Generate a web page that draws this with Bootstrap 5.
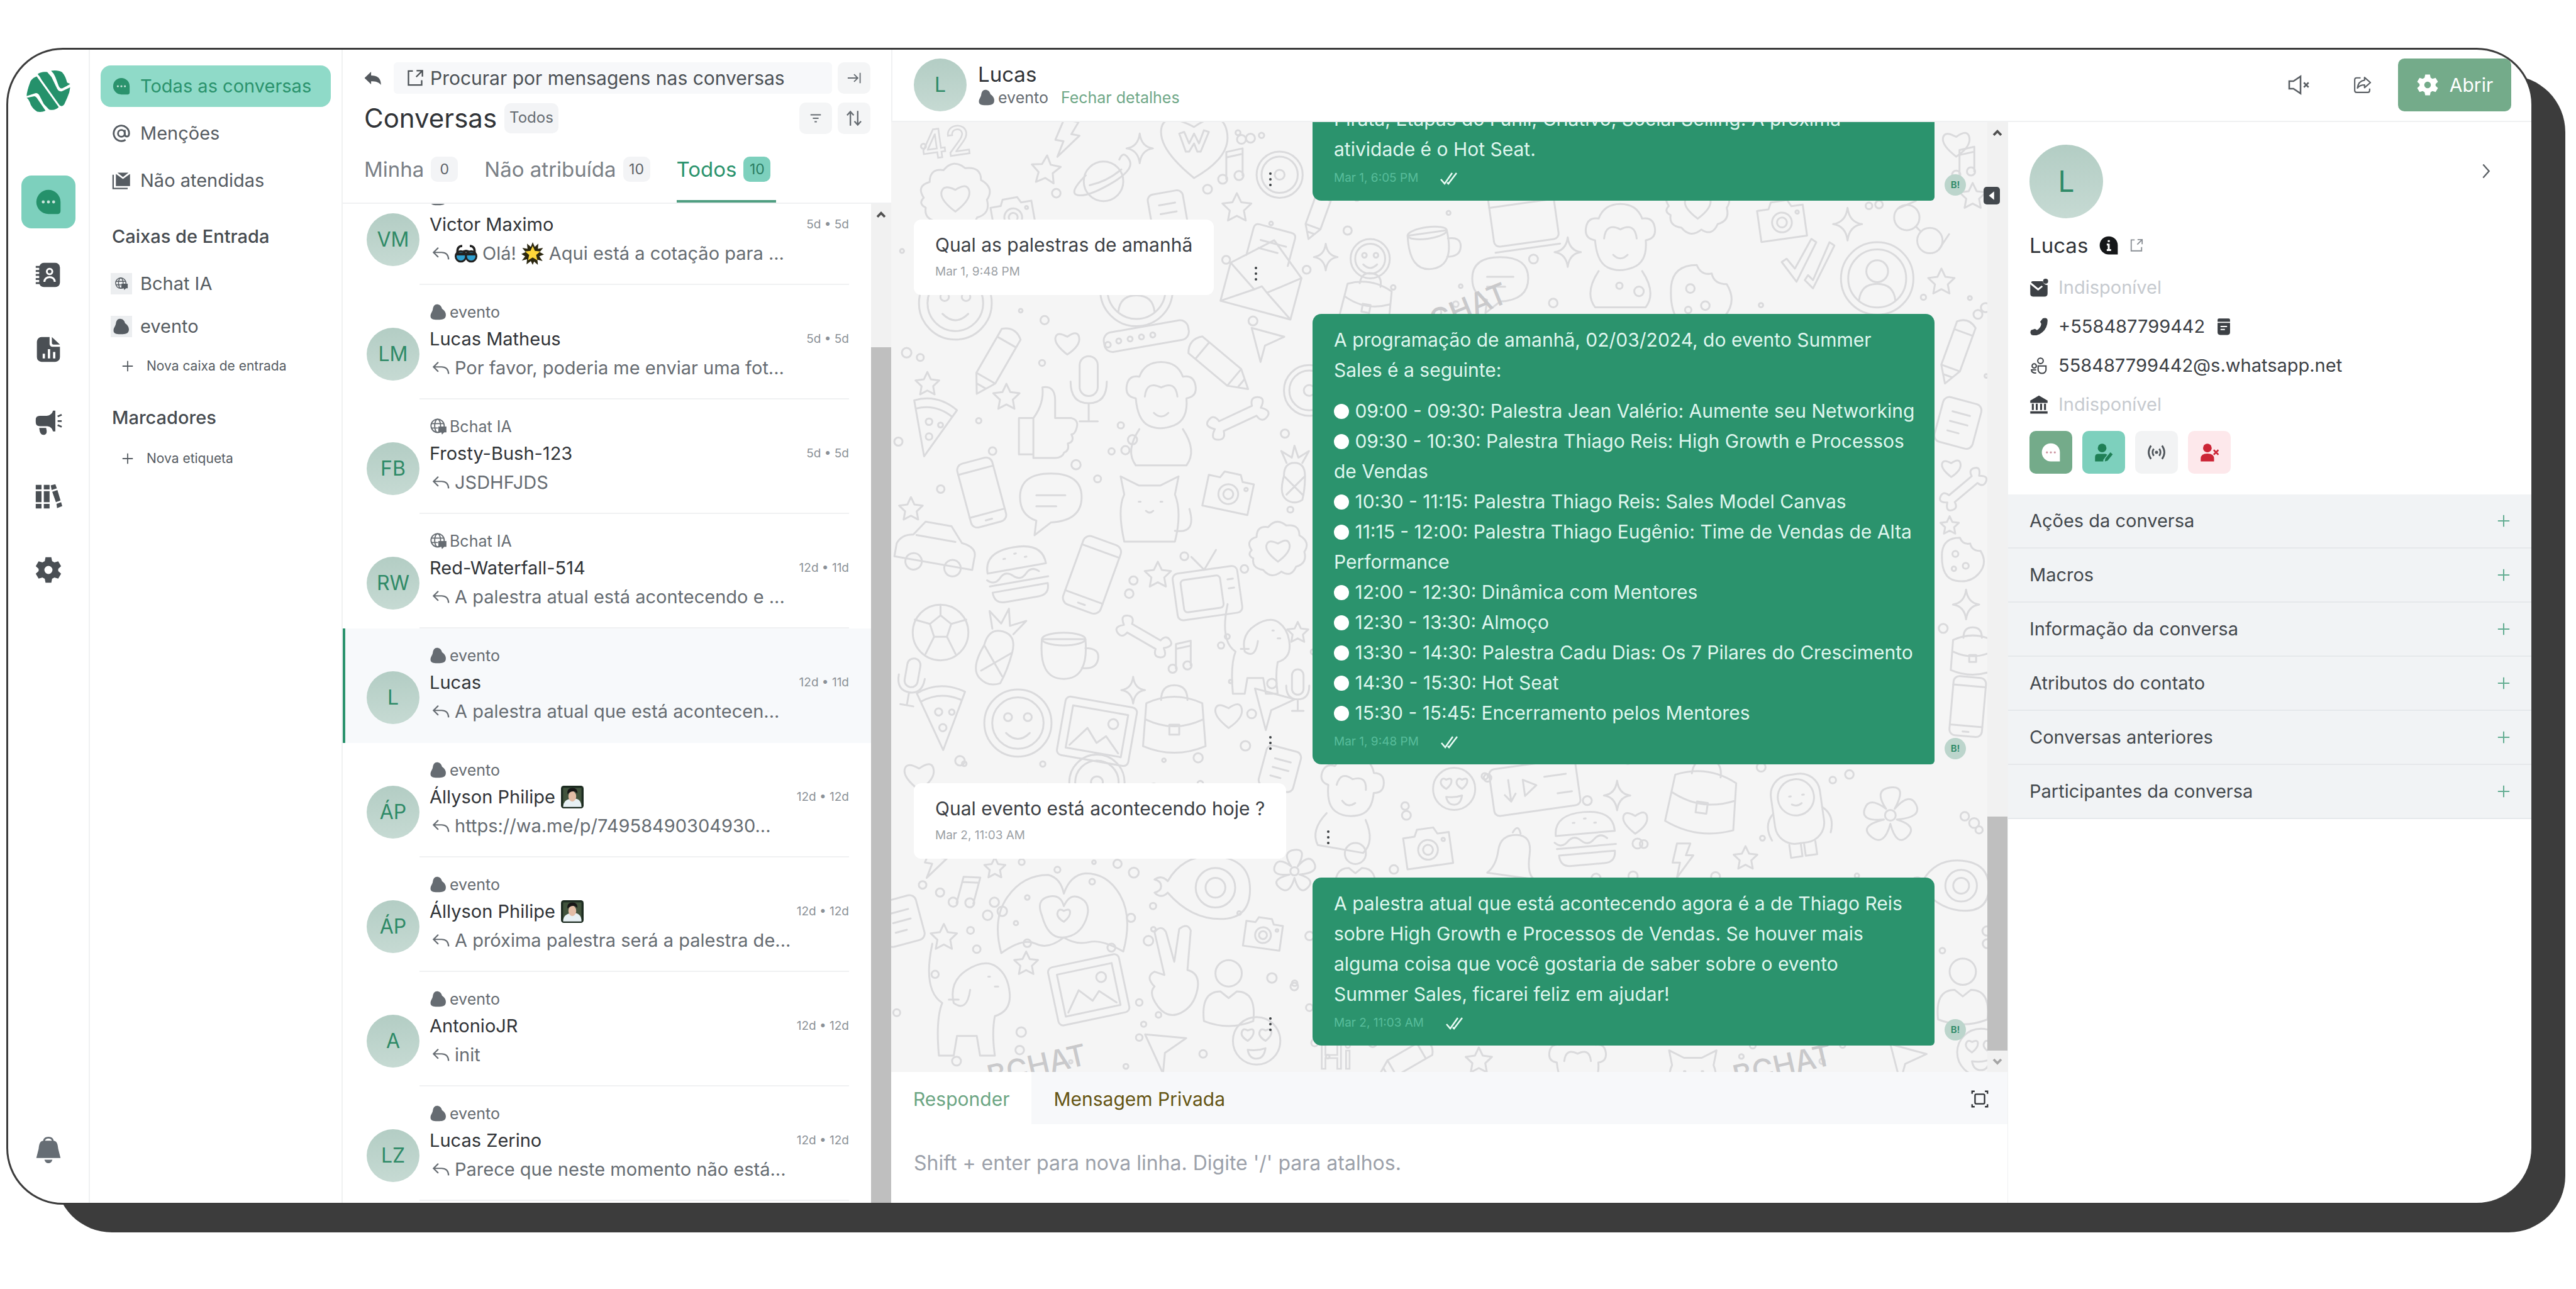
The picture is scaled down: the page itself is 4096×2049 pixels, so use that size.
<!DOCTYPE html>
<html lang="pt-BR">
<head>
<meta charset="utf-8">
<meta name="viewport" content="width=device-width, initial-scale=1">
<title>Bchat – Conversas</title>
<link href="https://cdn.jsdelivr.net/npm/bootstrap@5.3.0/dist/css/bootstrap.min.css" rel="stylesheet">
<style>
:root{--green:#2b936d;--mint:#7dd0bd;--ink:#303337;--soft:#666c72;--rule:#f0f1f2}
body{font-family:Inter,"Noto Sans",sans-serif;font-size:29px;line-height:44px;color:var(--ink);background:#fff;padding:76px 68px 0 10px;min-height:100vh}
svg{display:block;flex:none}
button{font:inherit;color:inherit;background:none;border:0;padding:0}
a{color:inherit;text-decoration:none}
.i18{width:18px;height:18px}.i22{width:22px;height:22px}.i28{width:28px;height:28px}.i30{width:30px;height:30px}.i36{width:36px;height:36px}.i44{width:44px;height:44px}
.stack{position:relative;z-index:0}
.stack::before{content:"";position:absolute;z-index:-1;top:44px;left:78px;right:-51px;bottom:-44px;border-radius:90px;background:#3c3c3c}
.frame{height:calc(100vh - 210px);border:3px solid #3c3c3c;border-radius:90px;background:#fff;overflow:hidden}
.rail{width:130px;border-right:2px solid var(--rule);padding:33px 0 42px;color:#4a4f54}
.logo{width:70px;height:66px}
.rail-nav{gap:33px;margin-top:101px}
.rail-btn{width:86px;height:84px;border-radius:16px;display:flex;align-items:center;justify-content:center}
.rail-btn.on{background:var(--mint);color:#25916b}
.side{width:402px;border-right:2px solid var(--rule);padding:25px 17px;color:#565c62}
.side-item{height:66px;border-radius:16px;padding:0 18px;gap:15px;display:flex;align-items:center}
.side-item.on{background:#8fdac8;color:#2b936d}
.side-head{color:#464b50;font-weight:500;font-size:29px;padding-left:18px;line-height:44px}
.side-new{font-size:21px;height:56px;padding-left:34px;gap:21px;display:flex;align-items:center}
.chip{background:#eceef0;width:34px;height:34px;display:flex;align-items:center;justify-content:center;margin:0 -2px}
.list{width:872px}
.list-head{padding:20px 33px 0 34px;border-bottom:2px solid var(--rule)}
.backward{width:28px;color:#54595e}
.search{height:50px;background:#f7f8fa;border-radius:6px;padding-left:20px;gap:10px;margin-left:19px;margin-right:9px;font-size:30px;color:#4c5156}
.sq{width:52px;height:50px;border-radius:10px;background:#f4f5f6;color:#666c72;display:flex;align-items:center;justify-content:center}
.title{font-size:42px;font-weight:400;line-height:50px;margin:0}
.pilltag{font-size:24px;background:#f3f4f6;border-radius:10px;height:48px;line-height:46px;padding:0 8px;color:var(--soft);margin-left:12px}
.tabs{height:109px;gap:33px;font-size:33px;color:#7a8086;line-height:44px}
.tabs button{padding-right:9px;gap:11px;height:109px;padding-top:6px;display:flex;align-items:center;border-bottom:4px solid transparent}
.tabs .on{color:var(--green);border-color:#4f9e81}
.num{font-size:23px;min-width:43px;height:40px;line-height:40px;border-radius:10px;background:#f3f4f6;text-align:center;color:#5d6369}
.on .num{background:var(--mint);color:#2a7d62}
.convs{overflow:hidden;padding-bottom:3px}
.conv{height:182px;flex:none;border-left:4px solid transparent;padding:0 35px 0 34px;display:flex}
.conv.on{background:#f7f9fb;border-color:var(--green)}
.ava{width:84px;height:84px;border-radius:50%;background:linear-gradient(#b3cdc4,#c6dad3);color:#2f8a67;font-size:32px;display:flex;align-items:center;justify-content:center;flex:none}
.conv .ava{margin-top:68px}
.conv-main{border-bottom:2px solid var(--rule);padding:26px 0 0 16px}
.conv.on .conv-main{border-color:#f7f9fb}
.inbox{font-size:25px;line-height:34px;color:var(--soft);gap:4px;display:flex;align-items:center}
.who{font-size:29px;line-height:46px;gap:9px;display:flex;align-items:center;margin-top:3px}
.when{font-size:19px;color:#8b9197}
.last{font-size:29px;line-height:46px;color:#666c72;gap:8px;display:flex;align-items:center;white-space:nowrap;padding-left:4px}
.bar{width:32px;flex:none;background:#f1f1f1;color:#505050;display:flex;flex-direction:column;align-items:center}
.bar svg{margin-top:8px}
.grip{width:32px;background:#bfbfbf}
.grip-list{margin-top:202px;flex:1}
.grip-chat{margin-top:auto;height:372px}
.main-head{height:118px;padding:0 32px 0 34px;border-bottom:2px solid var(--rule);border-left:2px solid var(--rule)}
.h-name{font-size:33px;line-height:40px}
.green-link{color:#70a888;font-size:25px;margin-left:16px}
.tool{color:#5a5f64}
.open-btn{height:84px;width:180px;border-radius:10px;background:#74ab8a;color:#fff;gap:17px;font-size:30px;margin-left:42px}
.open-btn:hover{background:#68a07f;color:#fff}
.stage{background:#f5f5f5;overflow:hidden;min-height:0}
.doodle{position:absolute;inset:0;width:100%;height:100%}
g[id^="d-"] *,.doodle circle{vector-effect:non-scaling-stroke}
.thread{position:relative;height:100%;padding:0 34px 42px 36px;gap:30px;display:flex;flex-direction:column;justify-content:flex-end}
.msg{display:flex;align-items:flex-end;flex:none;font-size:30px;line-height:48px;white-space:nowrap}
.bub-in{background:#fff;border-radius:12px;padding:16px 34px 23px;color:#3c4045}
.bub-out{background:var(--green);color:#dff6ee;border-radius:14px 14px 6px 14px;width:989px;padding:17px 0 22px 34px}
.stamp{font-size:19px;line-height:28px;color:#9ba0a5;margin-top:5px}
.bub-out .stamp{color:#58bd9b;gap:34px;display:flex;align-items:center;margin-top:8px}
.msg p{margin:0}.agenda{padding-top:17px}
.dot{display:inline-block;width:24px;height:24px;border-radius:50%;background:#fff;vertical-align:-2px;margin-right:1px}
.keb{width:12px;height:26px;color:#3c4043;margin:0 61px 21px}
.mini{width:34px;height:34px;border-radius:50%;background:#bcd5cc;color:#2f8a67;font-size:15px;font-weight:600;line-height:34px;text-align:center;margin:0 0 8px 16px}
.fold{position:absolute;right:12px;top:103px;width:26px;height:28px;border-radius:5px;background:#43484d;color:#fff;display:flex;align-items:center;justify-content:center}
.comp-tabs{height:85px;background:#f7f8fa;display:flex;align-items:stretch;font-size:30px}
.comp-tabs button{padding:3px 35px 0}
.comp-tabs .grow-btn{padding-right:30px}
.comp-tabs .on{background:#fff;color:#6ca583}
.priv{color:#655513}
.reply{border:0;resize:none;height:127px;width:100%;padding:38px 36px;font-size:32px;line-height:48px;outline:0;color:var(--ink);display:block}
.reply::placeholder{color:#9ca1aa}
.details{width:833px;border-left:1px solid var(--rule)}
.card-top{padding:36px 34px 33px}
.ava-lg{width:117px;height:117px;font-size:46px}
.person{margin:23px 0 16px;gap:18px}
.row-i{height:62px;gap:16px;display:flex;align-items:center;color:#3c4045}
.none{color:#c6cacf}
.act{width:68px;height:68px;border-radius:10px;display:flex;align-items:center;justify-content:center}
.fold-row{height:86px;background:#f1f3f5;border-bottom:2px solid #e5e8eb;padding:0 34px;width:100%;display:flex;align-items:center;justify-content:space-between;color:#43484d}
.plus{color:#63ad92;width:20px;height:20px}
</style>
</head>
<body>
<svg width="0" height="0" class="position-absolute" aria-hidden="true">
<defs>
<symbol id="chat" viewBox="0 0 24 24"><path fill="currentColor" d="M12 1.500a10.500 10.500 0 0 1 10.500 10.500v8a2.500 2.500 0 0 1-2.500 2.500h-8a10.500 10.500 0 0 1 0-21z"/><g fill="#fff" opacity=".75"><circle cx="7.500" cy="12" r="1.300"/><circle cx="12" cy="12" r="1.300"/><circle cx="16.500" cy="12" r="1.300"/></g></symbol>
<symbol id="contacts" viewBox="0 0 24 24"><rect x="4" y="1" width="18" height="21" rx="4" fill="currentColor"/><path stroke="currentColor" stroke-width="1.600" d="M1 4.500h4M1 8h4M1 11.500h4M1 15h4M1 18.500h4"/><circle cx="13" cy="8.500" r="2.400" fill="none" stroke="#fff" stroke-width="1.600"/><path fill="none" stroke="#fff" stroke-width="1.700" d="M8.500 17.500c0-5.500 9-5.500 9 0"/></symbol>
<symbol id="report" viewBox="0 0 24 24"><path fill="currentColor" d="M6 1.500h7v6a2.500 2.500 0 0 0 2.500 2.500H22v9a4 4 0 0 1-4 4H6a4 4 0 0 1-4-4V5.500a4 4 0 0 1 4-4zM15 1.500L22 8h-5.500A1.500 1.500 0 0 1 15 6.500z"/><path stroke="#fff" stroke-width="2" d="M8 16v4M12.500 12v8M17 14.500V20"/></symbol>
<symbol id="horn" viewBox="0 0 24 24"><path fill="currentColor" d="M1 9.500Q1 6 4.500 6h6Q15 5.500 16 1.500h2v18h-2q-1-4-5-4.500H4.500Q1 15 1 11.500zM4 16.500h6q1.500 5.500-1.500 6t-4-3z"/><path stroke="currentColor" stroke-width="1.500" d="M20 6.500l3.500-1.500M20 10.500h3.500M20 14l3.500 1.500"/></symbol>
<symbol id="books" viewBox="0 0 24 24"><path fill="currentColor" d="M1 2h5v4H1zM1 7.500h5V17H1zM1 18.500h5v4H1zM8 2h5v4H8zM8 7.500h5V17H8zM8 18.500h5v4H8zM14 2.500l4-1 1.300 3.500-4.500 1.500zM15.300 8l4.500-1.500 2.700 9-4 1.500zM19 18.500l4-1.500 1 3.500-4.500 1.700z"/></symbol>
<symbol id="gear" viewBox="0 0 24 24"><path fill="currentColor" fill-rule="evenodd" d="M9.500 1h5l.7 3.300 2 1.200L20.500 4.500 23 8.700 20.500 11v2L23 15.300 20.500 19.500l-3.300-1-2 1.200L14.500 23h-5l-.7-3.300-2-1.200-3.300 1L1 15.300 3.500 13v-2L1 8.700l2.500-4.200 3.300 1 2-1.200zM12 8.500a3.500 3.500 0 1 0 0 7 3.500 3.500 0 0 0 0-7z"/></symbol>
<symbol id="bell" viewBox="0 0 24 24"><path fill="currentColor" fill-rule="evenodd" d="M12 .5c-2.500 0-4.500 1.500-4.500 3.500C4.500 4.500 4 7 3.500 11l-2 8h21l-2-8C20 7 19.500 4.500 16.500 4 16.500 2 14.500.5 12 .5zm0 1.500c1.500 0 2.800.8 3 2H9c.2-1.200 1.500-2 3-2zM8.500 20.500h7q-1 3-3.500 3t-3.500-3z"/></symbol>
<symbol id="at" viewBox="0 0 24 24"><g fill="none" stroke="currentColor" stroke-width="2.300"><circle cx="12" cy="12" r="4.300"/><path d="M16.300 7.500V13q0 3 2.700 3t2.800-4a9.800 9.800 0 1 0-4.500 8.200"/></g></symbol>
<symbol id="mails" viewBox="0 0 24 24"><path fill="currentColor" d="M5 3.500L14 10l9-6.500V19H5zM7 2h14l-7 5.500z"/><path fill="none" stroke="currentColor" stroke-width="1.800" d="M1.500 4.500v17.500H20"/></symbol>
<symbol id="globe" viewBox="0 0 24 24"><g fill="none" stroke="currentColor" stroke-width="1.600"><circle cx="11" cy="11" r="9"/><ellipse cx="11" cy="11" rx="4" ry="9"/><path d="M2.500 8h17M2.500 14h9"/></g><path fill="currentColor" d="M12 12h11v8h-3l-3 3-1-3h-4z"/></symbol>
<symbol id="blob" viewBox="0 0 24 24"><path fill="currentColor" d="M10 1.500c3.500 0 6 2 7 6 4 2.500 6 6.500 5 10.500-1 4-5 4.500-10 4.500S2.500 22.500 1.500 19C.5 14.500 4 12 4.500 8S7 1.500 10 1.500z"/></symbol>
<symbol id="add" viewBox="0 0 24 24"><path stroke="currentColor" stroke-width="2.400" d="M12 1v22M1 12h22"/></symbol>
<symbol id="back" viewBox="0 0 24 24"><path fill="currentColor" d="M9.500 3.500v5c8 0 13.500 3 13.500 13-3-4-7-5-13.500-5v4L.5 12z"/></symbol>
<symbol id="ext" viewBox="0 0 24 24"><path fill="none" stroke="currentColor" stroke-width="2" d="M9 2.500H3v19h18V15M14 2h8v8M22 2l-8.500 8.500"/></symbol>
<symbol id="toend" viewBox="0 0 24 24"><path fill="none" stroke="currentColor" stroke-width="2" d="M1 12h17M12 5.500l6.500 6.500-6.500 6.500M22.500 3v18"/></symbol>
<symbol id="filter" viewBox="0 0 24 24"><path stroke="currentColor" stroke-width="2.200" d="M3 6h18M7 12h10M10 18h4"/></symbol>
<symbol id="sort" viewBox="0 0 24 24"><path fill="none" stroke="currentColor" stroke-width="2" d="M7 22V3M2.500 8L7 3l4.500 5M17 2v19M12.500 16l4.500 5 4.500-5"/></symbol>
<symbol id="reply" viewBox="0 0 24 24"><path fill="none" stroke="currentColor" stroke-width="1.900" d="M8.500 4L2 10.500 8.500 17M2 10.500h11q9 0 9.500 9.500"/></symbol>
<symbol id="up" viewBox="0 0 24 24"><path fill="none" stroke="currentColor" stroke-width="5" d="M4 17l8-8 8 8"/></symbol>
<symbol id="down" viewBox="0 0 24 24"><path fill="none" stroke="currentColor" stroke-width="5" d="M4 8l8 8 8-8"/></symbol>
<symbol id="mute" viewBox="0 0 24 24"><path fill="none" stroke="currentColor" stroke-width="1.700" d="M2 8h4.500L14 3v18l-7.500-5H2zM17.500 9.500l5 5M22.500 9.500l-5 5"/></symbol>
<symbol id="share" viewBox="0 0 24 24"><path fill="none" stroke="currentColor" stroke-width="1.700" stroke-linejoin="round" d="M10 3H5Q2.500 3 2.500 5.500V19q0 2.500 2.500 2.500h14q2.500 0 2.500-2.500v-2.500M15 2.500l7.500 6.500-7.500 6.500V12q-6 0-9 4 1-9 9-10z"/></symbol>
<symbol id="kebab" viewBox="0 0 12 26"><g fill="currentColor"><circle cx="6" cy="4" r="2"/><circle cx="6" cy="13" r="2"/><circle cx="6" cy="22" r="2"/></g></symbol>
<symbol id="ticks" viewBox="0 0 28 24"><path fill="none" stroke="#e9fbf4" stroke-width="2.600" d="M2 14l6 7L20 4M12 19l2 2L27 4"/></symbol>
<symbol id="tri" viewBox="0 0 24 24"><path fill="currentColor" d="M17 3v18L6 12z"/></symbol>
<symbol id="expand" viewBox="0 0 24 24"><g fill="none" stroke="currentColor" stroke-width="2"><rect x="5.500" y="5.500" width="13" height="13" rx="1.500"/><path d="M1.500 5V1.500H5M19 1.500h3.500V5M22.500 19v3.500H19M5 22.500H1.500V19"/></g></symbol>
<symbol id="chev" viewBox="0 0 24 24"><path fill="none" stroke="currentColor" stroke-width="2" d="M8 3l8 9-8 9"/></symbol>
<symbol id="info" viewBox="0 0 24 24"><path fill="#151719" d="M12 .5A11.500 11.500 0 0 1 23.500 12v11.500H12A11.500 11.500 0 0 1 12 .5z"/><path stroke="#fff" stroke-width="2.400" d="M12 10v8M9.500 11H12M9.500 18h5.500M10.800 6.500h2.500"/></symbol>
<symbol id="mail" viewBox="0 0 24 24"><path fill="currentColor" d="M4 4h13q0 4 6 5v10.500q0 4-4 4H4.500Q1 23.500 1 20V8l10 8 6-5-1.500-1.500L11 13 2 5.500Q2.500 4 4 4z"/><circle cx="20.500" cy="4" r="3.200" fill="currentColor"/></symbol>
<symbol id="phone" viewBox="0 0 24 24"><path fill="currentColor" d="M17 1.500q6-1.500 6 3Q23 14 16 19.500T2.500 22.500Q0 20 2 16.500l5-1.500 2.500 1.500q5-3 5.500-8L13.500 6z"/></symbol>
<symbol id="people" viewBox="0 0 24 24"><g fill="none" stroke="currentColor" stroke-width="1.600"><circle cx="14" cy="6" r="3.500"/><circle cx="6" cy="12.500" r="2.700"/><path d="M11 12.500h10v5.500q-1 4-5 4T11 18zM8.500 17.500H2.500q0 4 6 4"/></g></symbol>
<symbol id="bank" viewBox="0 0 24 24"><path fill="currentColor" d="M12 .5L23 7v3H1V7zM3 11h2.500v8H3zM8 11h2.500v8H8zM13.500 11H16v8h-2.500zM18.500 11H21v8h-2.500zM1 20.500h22v3H1z"/></symbol>
<symbol id="clip" viewBox="0 0 24 24"><path fill="currentColor" d="M3.500 3q0-2 2-2h13q2 0 2 2v2.500h-17zM3.500 7h17v13q0 3.500-3.500 3.500H7q-3.500 0-3.500-3.500z"/><path stroke="#fff" stroke-width="1.700" d="M7.500 12h9M7.500 16h6"/></symbol>
<symbol id="edit" viewBox="0 0 24 24"><g fill="currentColor"><circle cx="10" cy="6.500" r="5.500"/><path d="M1 23.500V18q0-4 4-4h9.500l2 1-5 6.500v2z"/><path d="M20.500 12l3 2.500-6.500 8-3.500 1 .5-3.500z"/></g></symbol>
<symbol id="cast" viewBox="0 0 24 24"><g fill="none" stroke="currentColor" stroke-width="2.200"><path d="M5 3.500Q-1 12 5 20.500M8.500 7.500Q5.500 12 8.500 16.500M19 3.500q6 8.500 0 17M15.500 7.500q3 4.500 0 9"/></g><circle cx="12" cy="12" r="2" fill="currentColor"/></symbol>
<symbol id="userx" viewBox="0 0 24 24"><g fill="currentColor"><circle cx="9.500" cy="6.500" r="5.500"/><path d="M1 23.500V20q0-6.500 8.500-6.500T18 20v3.500z"/></g><path stroke="currentColor" stroke-width="2" d="M17.500 9l6 6M23.500 9l-6 6"/></symbol>
<symbol id="glasses" viewBox="0 0 24 24"><path fill="none" stroke="#222" stroke-width="2.400" d="M3 12Q2 4 8 4M21 12q1-8-5-8M8 11q4-3.500 8 0"/><circle cx="6.500" cy="15" r="5.500" fill="#2f9fd0" stroke="#222" stroke-width="2"/><circle cx="17.500" cy="15" r="5.500" fill="#2f9fd0" stroke="#222" stroke-width="2"/><path stroke="#222" stroke-width="3" d="M2 12.500h20"/></symbol>
<symbol id="glow" viewBox="0 0 24 24"><path fill="#2b2710" d="M12 0l2.200 5L18 1.500l-.5 5.500 5.500-1-3.500 4.500L24 13l-5 2 3.500 5-5.500-1.500.5 5.500-4-3.500L12 24l-2-4-4.500 3.500.5-5.500L.5 19.500 4 15l-4-2.500 4.500-2L1 6l5.500 1L6 1.500 10 5z"/><path fill="#ffd83a" d="M12 4l2.300 5.200 5.700.6-4.300 3.700 1.300 5.700-5-3-5 3 1.300-5.700L4 9.800l5.700-.6z"/></symbol>
<symbol id="photo" viewBox="0 0 32 32"><rect width="32" height="32" rx="4" fill="#1c2b20"/><rect x="3" y="3" width="26" height="26" fill="#41543d"/><path fill="#e8f1f4" d="M3 30q0-11 13-12t13 12z"/><ellipse cx="16" cy="15" rx="5.500" ry="7.500" fill="#e3bda6"/><path fill="#161616" d="M9 12Q8 3 16 3t7 8q-2-3-6-3t-8 4z"/></symbol>
<g id="d-star"><path d="M0-8l2.400 5 5.600.7-4.100 3.900 1 5.500L0 4.500l-4.900 2.600 1-5.500L-8-2.300l5.600-.7z"/></g>
<g id="d-spark"><path d="M0-9Q1-1 8 0 1 1 0 9-1 1-8 0-1-1 0-9z"/></g>
<g id="d-heart"><path d="M0 8Q-9 1-8-3.500T0-4q7-5 8 .5T0 8z"/></g>
<g id="d-wheart"><path d="M0 21Q-21 4-20-8T0-10q17-12 20 3T0 21z"/><path d="M-9-6l3-1 3 7 3-6 3 6 3-8 3 1-5 12h-2L0 0l-3 5h-2z"/></g>
<g id="d-badge"><path d="M-16 0q-4-6 3-8 0-7 7-6 5-6 11-1 8-1 8 6 7 4 3 10 2 7-5 9-3 7-9 3-6 5-11-1-7-1-6-7-4-2-1-5z"/><path d="M0 7Q-8 1-7-3t7-1q6-4 7 .500T0 7z"/></g>
<g id="d-face"><circle r="17"/><circle r="13"/><circle cx="-5" cy="-3" r="2"/><circle cx="5" cy="-3" r="2"/><path d="M-6 5q6 6 12 0"/></g>
<g id="d-emoji"><circle r="16"/><path d="M-6 0q-5-3-4-6t4-1q4-2 4 1t-4 6zM6 0q-5-3-4-6t4-1q4-2 4 1T6 0zM-6 6q6 1 12-1-1 7-6 7t-6-6z"/></g>
<g id="d-saturn"><circle r="10"/><path d="M-9-3q-9 9-4 10t17-6 9-12-5 0M-7 2Q2 0 9-6"/></g>
<g id="d-ring"><circle r="14"/><circle r="11"/><circle r="3"/></g>
<g id="d-port"><circle r="20"/><circle r="16"/><circle cy="-4" r="6"/><path d="M-10 12q1-9 10-9t10 9"/></g>
<g id="d-cam"><path d="M-14-8h7l2-4H5l2 4h7v19h-28z"/><circle cy="1" r="6"/><circle cy="1" r="3"/><circle cx="10" cy="-4" r="1"/></g>
<g id="d-env"><path d="M-22-2L0-22 22-4v26h-44zM-22-2L-4 10l4-3 4 3L22-4M-22 22L-4 10M22 22L4 10M-14-9v-17q0-3 3-3h20q3 0 3 3v17M-8-20H8M-8-15H4"/></g>
<g id="d-pen"><path d="M-6-18q6-5 12 0v28L0 20l-6-10zM-6-13H6M-6 10H6M-3 15h6"/></g>
<g id="d-mic"><rect x="-5" y="-18" width="10" height="22" rx="5"/><path d="M-10-4q0 12 10 12T10-4M0 8v10M-5 18H5"/></g>
<g id="d-plane"><path d="M-10-10L12-4-1 2l-3 11zM-1 2l13-6"/></g>
<g id="d-pass"><rect x="-26" y="-6" width="52" height="12" rx="5"/><circle cx="-17" r="1.500"/><circle cx="-10" r="1.500"/><circle cx="-3" r="1.500"/><circle cx="4" r="1.500"/></g>
<g id="d-thumb"><path d="M-14-2h8q6-8 5-17 7-1 7 7v10h9q4 1 3 5t-3 4q2 4-2 5 1 4-2 5-1 3-5 3H-6v-22M-14-2v20h8"/></g>
<g id="d-cup"><path d="M-14-10h24q2 22-12 22t-12-22zM10-5q8 0 7 6t-9 5"/><ellipse cx="-2" cy="-10" rx="12" ry="3.500"/></g>
<g id="d-monkey"><path d="M-14-2q-6-1-5-7t7-5q3-8 12-8t12 8q6-1 7 5t-5 7q1 12-7 15t-14 0-7-15z"/><path d="M-9-3Q-8-12 0-8q8-4 9 5M-4 6q4 4 8 0"/><path d="M-12 15q-8 12-2 20h28q6-8-2-20"/></g>
<g id="d-cal"><rect x="-18" y="-15" width="36" height="30" rx="3"/><path d="M-18-7h36M-10-19v7M10-19v7M-18 18h36"/></g>
<g id="d-cookie"><path d="M-14-4q1-10 12-10 2 5 7 4 1 5 7 5 5 8-1 15T-5 15t-9-19z"/><circle cx="-5" cy="-3" r="2"/><circle cx="2" cy="5" r="2"/><circle cx="-6" cy="7" r="1.500"/></g>
<g id="d-glass"><circle cx="-9" r="7"/><circle cx="9" r="7"/><path d="M-2 0h4M-16 0l4-10M16 0l-2-10"/></g>
<g id="d-checks"><path d="M-14 0l3-2 5 6L4-14l3 2L-5 12zM2 8l3 3L15-12l3 2L5 16l-5-5z"/></g>
<g id="d-note"><path d="M-4 7V-8l9-2V5M-4-5l9-2"/><circle cx="-6" cy="7" r="2.500"/><circle cx="3" cy="5" r="2.500"/></g>
<g id="d-bolt"><path d="M-4-11H5L2-3h5L-4 12l2-10h-5z"/></g>
<g id="d-flower"><circle r="2.500"/><path d="M-2-3q-6-9 2-10t2 10q7-8 10-2T3 2q10 3 5 8T0 4q-3 11-9 6t6-8q-11 1-9-5t10 0z"/></g>
<g id="d-burger"><path d="M-18-4q0-13 18-13T18-4zM-19 0q4 4 8 0t8 0 8 0 8 0M-18 4h36M-17 8h34q0 7-7 7h-20q-7 0-7-7z"/><path d="M-7-11h1M0-13h1M6-10h1"/></g>
<g id="d-bag"><path d="M-17-12q17-8 34 0l2 26q-19 8-38 0zM-17-2q17 8 34 0M-8-14q0-9 8-9t8 9M-3 1h6v6h-6z"/></g>
<g id="d-astro"><rect x="-15" y="-24" width="30" height="42" rx="12"/><circle cy="-10" r="11"/><path d="M-15-2q-7 6-3 16M15-2q7 6 3 16M-8 18v8h7v-8M1 18v8h7v-8M-4-11h1M4-11h1M-3-6q3 2 6 0"/></g>
<g id="d-avo"><path d="M-24 4q-4 4-8 0 4-1 4-4t-4-4q4-3 8 1Q-14-20 6-18t20 20-18 18-32-16z"/><circle cx="5" cy="1" r="12"/><circle cx="5" cy="1" r="6"/></g>
<g id="d-hands"><path d="M-38 26q-6-22 4-36t26-14q8 2 10 12 4-12 14-13 14 0 22 14t2 36M-12 2q-4-10 4-12t10 6q4-9 11-5t3 14T2 16-12 2zM-38 26q14-10 22-6T2 16M40 25q-14-8-22-6T2 16"/><path d="M2 6q-5-3-4-6t4-1q4-2 4 1t-4 6z"/></g>
<g id="d-dog"><path d="M-22-34q-6 28 6 36-4 10-2 32h9l2-12h12l2 12h9q-2-14 0-24 10-3 9-14t-8-16-18 2-8 20q8 6 10-8M-12 0h6M16-8h2M12-14h1"/></g>
<g id="d-photo"><rect x="-22" y="-18" width="44" height="36" rx="3"/><rect x="-17" y="-13" width="34" height="26"/><path d="M-15 11l9-12 7 8 5-5 9 9"/><circle cx="9" cy="-6" r="3"/></g>
<g id="d-peace"><path d="M-10 6q-6-6 0-9l6 2-6-26q4-5 7 0l5 18 3-20q5-4 7 1l-2 24q8 2 6 12t-10 14-14-4-2-12z"/></g>
<g id="d-person"><circle cy="-11" r="8"/><path d="M-15 18q-2-18 10-18l5 4 5-4q12 0 10 18-15 6-30 0z"/></g>
<g id="d-tag"><rect x="-13" y="-14" width="24" height="28" rx="4"/><path d="M-6-6H5M-6 0H5M-6 6H1"/></g>
<g id="d-card"><rect x="-24" y="-13" width="48" height="26" rx="3"/><path d="M-14-6v12M-17 2l3 4 3-4M-6-5v9l7-5zM6-5h12M12 5h8"/></g>
<g id="d-bell2"><path d="M-12 10q4-4 4-12t8-9 8 9 4 12zM-3 12q3 5 6 0M-2-12q2-5 4 0"/></g>
<g id="d-bone"><path d="M-14-3q-5-4-1-6t5 3h20q1-5 5-3t-1 6q5 4 1 6t-5-3h-20q-1 5-5 3t1-6z"/></g>
<g id="d-pizza"><path d="M-14-16q14-4 26 6L-8 18zM-13-11q12-3 22 5"/><circle cx="-5" cy="-3" r="2"/><circle cx="-5" cy="6" r="2"/><circle cx="2" cy="-1" r="1.500"/></g>
<g id="d-bubble"><path d="M-17-2q0-13 17-13T17-2 0 12l-9 7 1-8q-9-3-9-13zM-8-3H8M-8 3H3"/></g>
<g id="d-cat"><path d="M-14 18q-4-18 0-26l-2-10 10 5h12l10-5-2 10q4 10 0 26zM-6-4h1M6-4h1M-2 1q2 2 4 0M14 12q12 2 8-12"/></g>
<g id="d-phone"><rect x="-11" y="-20" width="22" height="40" rx="4"/><path d="M-11-14h22M-11 13h22M-2 17h4"/></g>
<g id="d-car"><path d="M-24 8v-8q2-6 9-7l6-9h16l8 9q10 1 9 8v7zM-13-7h24"/><circle cx="-12" cy="9" r="5"/><circle cx="12" cy="9" r="5"/></g>
<g id="d-tv"><rect x="-18" y="-12" width="36" height="26" rx="3"/><rect x="-14" y="-8" width="22" height="18" rx="2"/><path d="M-6-20l6 8 8-10M12-5h3M12 0h3"/></g>
<g id="d-pine"><path d="M-8 0q0-10 8-10T8 0 6 18q-6 4-12 0T-8 0zM-6-10l-4-9 8 5 2-9 3 9 8-5-5 9M-8 0l14 14M8 0L-6 14"/></g>
<g id="d-ball"><circle r="13"/><path d="M-5-4l5-4 5 4-2 6h-6zM-5-4l-7-2M5-4l7-2M3 2l4 8M-3 2l-4 8M0-8v-5"/></g>
</defs>
</svg>

<div class="stack">
<main class="frame d-flex">
  <nav class="rail d-flex flex-column align-items-center flex-shrink-0" aria-label="Principal">
    <a href="#" aria-label="Início"><svg class="logo" viewBox="117 118 184 138" preserveAspectRatio="none"><g fill="#25916b"><path d="M164 130Q178 121 204 123L222 140 245 178Q253 190 266 187L300 174Q298 192 288 208L275 231Q266 240 256 234L181 150Q174 138 164 130z"/><path d="M220 119Q250 116 266 124 280 136 287 158L300 163Q286 170 268 177 257 180 252 170L238 140Q232 127 220 119z"/><path d="M160 138L252 240Q236 253 212 248L190 230 172 202Q163 190 150 195L118 203Q118 188 134 154 144 142 160 138z"/><path d="M118 209L147 204Q156 203 163 212L197 252Q180 258 162 255 144 246 135 232 128 214 118 209z"/></g></svg></a>
    <div class="rail-nav d-flex flex-column">
      <button class="rail-btn on" aria-label="Conversas"><svg class="i44"><use href="#chat"/></svg></button>
      <button class="rail-btn" aria-label="Contatos"><svg class="i44"><use href="#contacts"/></svg></button>
      <button class="rail-btn" aria-label="Relatórios"><svg class="i44"><use href="#report"/></svg></button>
      <button class="rail-btn" aria-label="Campanhas"><svg class="i44"><use href="#horn"/></svg></button>
      <button class="rail-btn" aria-label="Central de ajuda"><svg class="i44"><use href="#books"/></svg></button>
      <button class="rail-btn" aria-label="Configurações"><svg class="i44"><use href="#gear"/></svg></button>
    </div>
    <button class="rail-btn mt-auto" style="color:#666d74" aria-label="Notificações"><svg class="i44"><use href="#bell"/></svg></button>
  </nav>

  <aside class="side flex-shrink-0">
    <div class="d-grid" style="gap:9px">
      <a href="#" class="side-item on"><svg class="i30"><use href="#chat"/></svg>Todas as conversas</a>
      <a href="#" class="side-item"><svg class="i30"><use href="#at"/></svg>Menções</a>
      <a href="#" class="side-item"><svg class="i30"><use href="#mails"/></svg>Não atendidas</a>
    </div>
    <div class="side-head" style="margin-top:34px">Caixas de Entrada</div>
    <div class="d-grid" style="margin-top:20px;gap:2px">
      <a href="#" class="side-item"><span class="chip"><svg class="i22"><use href="#globe"/></svg></span>Bchat IA</a>
      <a href="#" class="side-item"><span class="chip"><svg class="i28"><use href="#blob"/></svg></span>evento</a>
      <a href="#" class="side-new"><svg class="i18"><use href="#add"/></svg>Nova caixa de entrada</a>
    </div>
    <div class="side-head" style="margin-top:32px">Marcadores</div>
    <a href="#" class="side-new" style="margin-top:15px"><svg class="i18"><use href="#add"/></svg>Nova etiqueta</a>
  </aside>

  <section class="list flex-shrink-0 d-flex flex-column">
    <header class="list-head">
      <div class="d-flex align-items-center">
        <button class="backward" aria-label="Voltar"><svg class="i28"><use href="#back"/></svg></button>
        <button class="search flex-grow-1 d-flex align-items-center"><svg class="i28"><use href="#ext"/></svg>Procurar por mensagens nas conversas</button>
        <button class="sq" aria-label="Recolher"><svg class="i22"><use href="#toend"/></svg></button>
      </div>
      <div class="d-flex align-items-center" style="margin-top:14px">
        <h1 class="title">Conversas</h1><span class="pilltag">Todos</span>
        <div class="d-flex ms-auto" style="gap:9px">
          <button class="sq" aria-label="Filtrar"><svg class="i22"><use href="#filter"/></svg></button>
          <button class="sq" aria-label="Ordenar"><svg class="i28"><use href="#sort"/></svg></button>
        </div>
      </div>
      <div class="tabs d-flex">
        <button>Minha <span class="num">0</span></button>
        <button>Não atribuída <span class="num">10</span></button>
        <button class="on">Todos <span class="num">10</span></button>
      </div>
    </header>
    <div class="d-flex flex-grow-1" style="min-height:0">
      <div class="convs flex-grow-1 d-flex flex-column justify-content-end" id="convs"></div>
      <div class="bar"><svg class="i18"><use href="#up"/></svg><div class="grip grip-list"></div></div>
    </div>
  </section>

  <section class="flex-grow-1 d-flex flex-column" style="min-width:0">
    <header class="main-head d-flex align-items-center">
      <span class="ava">L</span>
      <div style="margin-left:18px">
        <div class="h-name">Lucas</div>
        <div class="inbox"><svg class="i28"><use href="#blob"/></svg>evento<a href="#" class="green-link">Fechar detalhes</a></div>
      </div>
      <button class="tool ms-auto" aria-label="Silenciar"><svg class="i36"><use href="#mute"/></svg></button>
      <button class="tool" style="margin-left:68px" aria-label="Compartilhar"><svg class="i30"><use href="#share"/></svg></button>
      <button class="open-btn d-flex align-items-center justify-content-center"><svg class="i36"><use href="#gear"/></svg>Abrir</button>
    </header>
    <div class="d-flex flex-grow-1" style="min-height:0">
      <div class="flex-grow-1 d-flex flex-column" style="min-width:0">
        <div class="stage d-flex flex-grow-1 position-relative">
          <div class="flex-grow-1 position-relative">
            <svg class="doodle" id="doodle" viewBox="543 75 667 577" preserveAspectRatio="xMinYMin slice" aria-hidden="true"></svg>
            <div class="thread">
              <div class="msg justify-content-end">
                <button aria-label="Opções"><svg class="keb"><use href="#kebab"/></svg></button>
                <div class="bub-out"><p>Pirata, Etapas do Funil, Criativo, Social Selling. A próxima<br>atividade é o Hot Seat.</p><div class="stamp">Mar 1, 6:05 PM <svg class="i28"><use href="#ticks"/></svg></div></div>
                <span class="mini">B!</span>
              </div>
              <div class="msg">
                <div class="bub-in"><p>Qual as palestras de amanhã</p><div class="stamp">Mar 1, 9:48 PM</div></div>
                <button aria-label="Opções"><svg class="keb"><use href="#kebab"/></svg></button>
              </div>
              <div class="msg justify-content-end">
                <button aria-label="Opções"><svg class="keb"><use href="#kebab"/></svg></button>
                <div class="bub-out"><p>A programação de amanhã, 02/03/2024, do evento Summer<br>Sales é a seguinte:</p>
                <p class="agenda"><span class="dot"></span> 09:00 - 09:30: Palestra Jean Valério: Aumente seu Networking<br><span class="dot"></span> 09:30 - 10:30: Palestra Thiago Reis: High Growth e Processos<br>de Vendas<br><span class="dot"></span> 10:30 - 11:15: Palestra Thiago Reis: Sales Model Canvas<br><span class="dot"></span> 11:15 - 12:00: Palestra Thiago Eugênio: Time de Vendas de Alta<br>Performance<br><span class="dot"></span> 12:00 - 12:30: Dinâmica com Mentores<br><span class="dot"></span> 12:30 - 13:30: Almoço<br><span class="dot"></span> 13:30 - 14:30: Palestra Cadu Dias: Os 7 Pilares do Crescimento<br><span class="dot"></span> 14:30 - 15:30: Hot Seat<br><span class="dot"></span> 15:30 - 15:45: Encerramento pelos Mentores</p>
                <div class="stamp">Mar 1, 9:48 PM <svg class="i28"><use href="#ticks"/></svg></div></div>
                <span class="mini">B!</span>
              </div>
              <div class="msg">
                <div class="bub-in"><p>Qual evento está acontecendo hoje ?</p><div class="stamp">Mar 2, 11:03 AM</div></div>
                <button aria-label="Opções"><svg class="keb"><use href="#kebab"/></svg></button>
              </div>
              <div class="msg justify-content-end">
                <button aria-label="Opções"><svg class="keb"><use href="#kebab"/></svg></button>
                <div class="bub-out"><p>A palestra atual que está acontecendo agora é a de Thiago Reis<br>sobre High Growth e Processos de Vendas. Se houver mais<br>alguma coisa que você gostaria de saber sobre o evento<br>Summer Sales, ficarei feliz em ajudar!</p><div class="stamp">Mar 2, 11:03 AM <svg class="i28"><use href="#ticks"/></svg></div></div>
                <span class="mini">B!</span>
              </div>
            </div>
          </div>
          <div class="bar"><svg class="i18"><use href="#up"/></svg><div class="grip grip-chat"></div><svg class="i18 mb-2" style="color:#a5a5a5"><use href="#down"/></svg></div>
          <button class="fold" aria-label="Recolher painel"><svg class="i18"><use href="#tri"/></svg></button>
        </div>
        <div class="comp-tabs">
          <button class="on">Responder</button><button class="priv">Mensagem Privada</button>
          <button class="grow-btn ms-auto" aria-label="Expandir"><svg class="i28"><use href="#expand"/></svg></button>
        </div>
        <textarea class="reply" aria-label="Mensagem" placeholder="Shift + enter para nova linha. Digite '/' para atalhos."></textarea>
      </div>

      <aside class="details flex-shrink-0">
        <div class="card-top">
          <div class="d-flex justify-content-between">
            <span class="ava ava-lg">L</span>
            <button class="tool" style="margin-right:24px;height:84px" aria-label="Fechar"><svg class="i28"><use href="#chev"/></svg></button>
          </div>
          <div class="person d-flex align-items-center"><span class="h-name">Lucas</span><svg class="i30"><use href="#info"/></svg><a href="#" aria-label="Abrir contato" style="color:#8a8f95"><svg class="i22"><use href="#ext"/></svg></a></div>
          <div class="row-i"><svg class="i30"><use href="#mail"/></svg><span class="none">Indisponível</span></div>
          <div class="row-i"><svg class="i30"><use href="#phone"/></svg>+558487799442 <button aria-label="Copiar"><svg class="i28"><use href="#clip"/></svg></button></div>
          <div class="row-i"><svg class="i30"><use href="#people"/></svg>558487799442@s.whatsapp.net</div>
          <div class="row-i"><svg class="i30"><use href="#bank"/></svg><span class="none">Indisponível</span></div>
          <div class="d-flex" style="gap:16px;margin-top:11px">
            <button class="act" style="background:#74ab8a;color:#fff" aria-label="Nova mensagem"><svg class="i30" viewBox="0 0 24 24"><path fill="#fff" d="M12 .5A11.500 11.500 0 0 1 23.500 12v11.500H12A11.500 11.500 0 0 1 12 .5z"/><g fill="#c98f9b"><circle cx="7" cy="12" r="1.300"/><circle cx="12" cy="12" r="1.300"/><circle cx="17" cy="12" r="1.300"/></g></svg></button>
            <button class="act" style="background:#7dd0bd;color:#1f7f55" aria-label="Editar contato"><svg class="i30"><use href="#edit"/></svg></button>
            <button class="act" style="background:#f2f3f4;color:#4f555b" aria-label="Unir contato"><svg class="i30"><use href="#cast"/></svg></button>
            <button class="act" style="background:#fde8eb;color:#cc2536" aria-label="Excluir contato"><svg class="i30"><use href="#userx"/></svg></button>
          </div>
        </div>
        <div id="folds"></div>
      </aside>
    </div>
  </section>
</main>
</div>

<script src="https://cdn.jsdelivr.net/npm/bootstrap@5.3.0/dist/js/bootstrap.bundle.min.js"></script>
<script>
const ic=(n,c)=>`<svg class="${c}"><use href="#${n}"/></svg>`;
const convs=[
 ['VM','evento','Victor Maximo','5d • 5d',ic('glasses','i36')+'Olá! '+ic('glow','i36')+'Aqui está a cotação para ...'],
 ['LM','evento','Lucas Matheus','5d • 5d','Por favor, poderia me enviar uma fot...'],
 ['FB','Bchat IA','Frosty-Bush-123','5d • 5d','JSDHFJDS'],
 ['RW','Bchat IA','Red-Waterfall-514','12d • 11d','A palestra atual está acontecendo e ...'],
 ['L','evento','Lucas','12d • 11d','A palestra atual que está acontecen...'],
 ['ÁP','evento','Állyson Philipe','12d • 12d','https://wa.me/p/74958490304930...'],
 ['ÁP','evento','Állyson Philipe','12d • 12d','A próxima palestra será a palestra de...'],
 ['A','evento','AntonioJR','12d • 12d','init'],
 ['LZ','evento','Lucas Zerino','12d • 12d','Parece que neste momento não está...']];
document.getElementById('convs').innerHTML=convs.map((c,i)=>`<a href="#" class="conv${i===4?' on':''}"><span class="ava">${c[0]}</span><span class="conv-main flex-grow-1"><span class="inbox">${ic(c[1]==='evento'?'blob':'globe','i28')}${c[1]}</span><span class="who">${c[2]}${c[0]==='ÁP'?ic('photo','i36'):''}<span class="when ms-auto">${c[3]}</span></span><span class="last">${ic('reply','i28')}${c[4]}</span></span></a>`).join('');
document.getElementById('folds').innerHTML=['Ações da conversa','Macros','Informação da conversa','Atributos do contato','Conversas anteriores','Participantes da conversa'].map(t=>`<button class="fold-row">${t}${ic('add','plus')}</button>`).join('');

/* wallpaper: name, x, y, rotation, scale */
const D=[['wheart',727,88,0,1],['saturn',672,111,0,1.2],['star',637,104,5,1.1],['badge',582,121,0,1.2],['ring',779,107,0,1],['spark',694,91,0,1],['note',751,102,0,1.1],['star',753,127,0,1.1],['env',770,168,15,1],['face',582,185,0,1.3],['port',692,177,0,1.1],['heart',650,209,0,.9],['pass',698,205,-10,1],['pen',606,221,30,1.100],['pen',743,223,-50,1.100],['mic',663,237,0,1.1],['plane',771,209,0,.9],['monkey',707,245,0,1.1],['star',565,234,0,.9],['star',613,242,0,1],['thumb',636,257,0,1.1],['pizza',571,260,0,1],['bone',755,258,-25,1.100],['ring',797,238,0,1.1],['cam',617,132,-10,.9],['bolt',650,85,10,1],['tag',712,130,-10,.9],
['pen',802,131,20,.8],['cup',872,152,-8,1],['face',834,158,0,.7],['cal',927,132,-8,1.100],['monkey',986,149,0,1.100],['badge',1033,126,0,1.100],['cookie',1035,180,0,1.300],['cam',1084,135,-8,1],['glass',1167,140,45,1.100],['bubble',913,172,0,1],['checks',1098,160,0,1],['port',1142,170,0,1.100],['spark',807,157,0,.9],['spark',954,154,0,1],['spark',1124,137,0,1.100],['star',1181,172,0,1],['bag',832,185,10,.8],['star',1200,120,0,1],['note',1196,100,0,1],['heart',1190,88,0,1],
['phone',598,300,-15,1],['car',570,335,10,1],['bubble',640,305,0,1.1],['cat',700,310,0,1.1],['cam',748,300,12,1],['badge',778,335,0,1],['burger',620,350,-10,1],['phone',665,350,20,1.1],['star',705,350,0,1],['tv',735,360,-8,1.1],['ball',573,385,0,1.3],['pine',608,395,15,1.1],['cup',650,400,0,1.1],['bone',695,390,30,1],['dog',765,395,0,.8],['note',720,400,0,1],['pizza',578,435,-15,1.1],['face',620,440,0,1.2],['photo',668,445,10,1],['bag',715,440,0,1],['heart',748,435,0,1],['plane',775,430,0,1.1],['spark',690,420,0,.9],['star',555,310,0,.9],['mic',555,415,10,.8],
['ring',668,476,0,1.2],['heart',560,472,0,1.1],['tag',780,468,15,.9],
['hands',646,555,0,.95],['avo',735,539,0,1],['flower',788,530,0,1],['note',589,543,15,1.100],['tag',550,560,-15,1],['star',575,570,0,1],['star',625,586,0,.9],['dog',590,608,0,1],['photo',663,602,-12,1],['peace',713,594,0,1],['cam',769,568,8,.8],['person',748,603,0,1],['emoji',765,633,0,.9],['plane',710,638,-10,1.100],['bolt',570,524,10,.9],['star',606,528,0,.8],
['cam',869,516,-8,1],['monkey',822,482,10,1],['card',934,479,-8,1.1],['bell2',921,521,8,1.200],['burger',965,511,-5,1],['person',825,528,0,.8],['bag',1036,487,8,1.1],['astro',1094,495,-8,1],['flower',1150,496,0,1.3],['star',1062,522,0,.9],['bolt',1024,523,0,.9],['avo',1189,538,0,.8],['person',1194,602,0,1],['heart',995,500,0,.9],['spark',984,484,0,1],['emoji',885,480,0,.8],['star',900,645,0,1],['monkey',960,648,0,.9],['pen',855,645,60,.9],['emoji',1205,640,0,.9],['cat',1030,655,0,.9],['plane',1160,645,0,1],
['pen',1190,215,20,1],['tag',1192,258,15,1],['bone',1196,300,-40,.9],['cookie',1194,340,0,.9],['spark',1196,368,0,1],['bag',1200,398,0,.7],['phone',1197,430,5,.9],['heart',1187,285,0,.7],['star',1186,320,0,.7],['pine',788,290,0,.8],['star',790,385,0,.8],['mic',790,420,0,.7]];
let s=20240302;const rnd=()=>(s=(s*16807)%2147483647)/2147483647;
let out='<g fill="none" stroke="#dadadc" stroke-width="3" stroke-linejoin="round" stroke-linecap="round">';
for(const [n,x,y,r,k] of D)out+=`<use href="#d-${n}" transform="translate(${x} ${y}) rotate(${r}) scale(${k})"/>`;
for(let i=0,n=0;i<4000&&n<420;i++){const x=545+rnd()*664,y=77+rnd()*573,r=1+rnd()*2;if(D.every(d=>Math.hypot(d[1]-x,d[2]-y)>(/star|spark|^heart|note|bolt|plane/.test(d[0])?12:23*d[4]))){out+=`<circle cx="${x.toFixed(1)}" cy="${y.toFixed(1)}" r="${r.toFixed(1)}"/>`;n++}}
out+='</g><g font-family="Inter,sans-serif" font-weight="500" fill="#c9c9cb">';
out+='<g font-size="18"><text transform="translate(603 661) rotate(-13)">BCHAT</text><text transform="translate(1056 661) rotate(-13)">BCHAT</text><text transform="translate(862 207) rotate(-22)">BCHAT</text></g><g fill="none" stroke="#dadadc" font-size="24"><text transform="translate(562 98) rotate(-8)">42</text><text x="803" y="650" font-size="20">Hi</text></g></g>';
document.getElementById('doodle').innerHTML=out;
</script>
</body>
</html>
